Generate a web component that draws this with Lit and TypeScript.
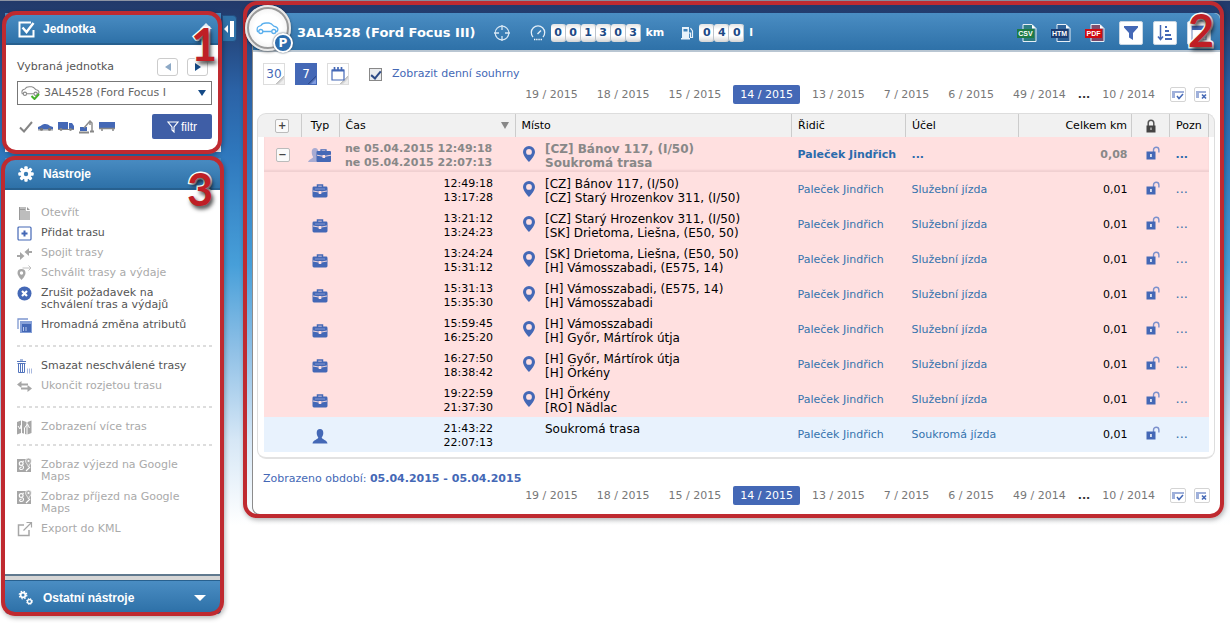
import { LitElement, html, svg, css, nothing } from "lit";
import { customElement, property } from "lit/decorators.js";

const BLUE = "#4468b6";
const GREY = "#a6a6a6";

const icon = (w: number, h: number, body: unknown) => html`<svg
  width=${w} height=${h} viewBox="0 0 ${w} ${h}" fill="none" aria-hidden="true">${body}</svg>`;

const carOutline = (color: string) => svg`<g stroke=${color} stroke-width="1.3" fill="none">
  <path d="M2.8 9.5H1.5C.8 7 1.2 5.200 2.500 4.500L5 3.500C6 1.600 7.500 1 10 1h3c2 .1 3.500 1.600 4.800 3.200 2 .5 3.700 1 4 2.600.2 1.200 0 2-.8 2.700h-1.200M6.800 9.500h9"/>
  <circle cx="4.800" cy="9.500" r="2"/><circle cx="17.800" cy="9.500" r="2"/></g>`;

const icons: Record<string, unknown> = {
  checkbox: icon(17, 17, svg`<path d="M13 1.500H1.500v14h14V9" stroke="#fff" stroke-width="2"/><path d="M4.500 6.500l4 4.500L15.500 2" stroke="#fff" stroke-width="2.400"/>`),
  gear: icon(16, 16, svg`<g fill="#fff"><circle cx="8" cy="8" r="5.400"/>${[0, 45, 90, 135].map(
    (a) => svg`<rect x="6.300" y=".3" width="3.400" height="15.400" rx="1" transform="rotate(${a} 8 8)"/>`)}</g><circle cx="8" cy="8" r="2.200" fill="#3a7db5"/>`),
  gears: icon(16, 16, svg`<g fill="none" stroke="#fff"><circle cx="5" cy="5" r="2.400" stroke-width="1.800"/><circle cx="5" cy="5" r="3.800" stroke-width="1.200" stroke-dasharray="1.500 1.500"/><circle cx="11.500" cy="11.500" r="2" stroke-width="1.300"/><circle cx="11.500" cy="11.500" r="3" stroke-width="1" stroke-dasharray="1.200 1.200"/></g>`),
  doc: icon(15, 15, svg`<path d="M2 1h7v4h4v9H2z" fill="#bdbdbd"/><path d="M10 1l3 3h-3zM3 3h5v1H3zM2 1h1v13H2z" fill="#999"/>`),
  plus: icon(15, 15, svg`<rect x="1" y="1" width="13" height="13" rx="1" stroke=${BLUE} stroke-width="1.200"/><path d="M7.500 4.500v6M4.500 7.500h6" stroke=${BLUE} stroke-width="2"/>`),
  join: icon(15, 15, svg`<path d="M0 9h3V6L7.500 10 3 14V11H0zM15 5h-3V2L7.500 6l4.500 4V7h3z" fill=${GREY}/>`),
  approve: icon(16, 16, svg`<path d="M4.500 4a4 4 0 0 0-4 4c0 3 4 7 4 7s4-4 4-7a4 4 0 0 0-4-4zm0 2.300a1.700 1.700 0 1 1 0 3.400 1.700 1.700 0 0 1 0-3.400z" fill=${GREY} fill-rule="evenodd"/><path d="M5.500 3H14M11.500 .5L14 3l-2.500 2.500" stroke="#c0c0c0"/>`),
  cancel: icon(15, 15, svg`<circle cx="7.500" cy="7.500" r="7" fill=${BLUE}/><path d="M5 5l5 5M10 5l-5 5" stroke="#fff" stroke-width="2.200"/>`),
  bulk: icon(15, 15, svg`<path d="M1 11V1h10" stroke="#7d97d0" stroke-width="1.300"/><rect x="3" y="3" width="12" height="12" fill="#86a0d8"/><rect x="5" y="6" width="9" height="8" fill=${BLUE}/><path d="M6.500 9v4M9 9v4" stroke="#b9c8ea"/>`),
  trash: icon(16, 15, svg`<path d="M0 2.500h9M3 1h3M.5 4.500h8M1.500 5v8.500h6V5M3.500 5v8M5.500 5v8" stroke="#5274bd"/><path d="M10.500 9.500v5M12.500 9.500v5M14.500 9.500v5" stroke="#a9b9df"/>`),
  swap: icon(15, 13, svg`<path d="M0 4.500L4.500 1v2.500H11v2H4.500V8zM15 8.500L10.500 5v2.500H4v2h6.500V12z" fill=${GREY}/>`),
  map: icon(15, 15, svg`<path d="M0 2l4-1.500V13l-4 1.500zM5 .5L9.500 2v12.500L5 13zM10.500 2L14.500 .5V13l-4 1.500z" fill=${GREY}/><path d="M1 6l2 3 1-4M7.500 14V8l3-4 2 4" stroke="#fff"/>`),
  gmap: icon(15, 15, svg`<rect x="0" y="1" width="14" height="13" fill=${GREY}/><circle cx="4.200" cy="5.500" r="1.900" stroke="#fff" stroke-width="1.200"/><path d="M5.500 3.300h1.500M5.300 7.500c2 1 1.500 4-1 4-2.400 0-2.200-2.500.5-2.500M9 13l4-4" stroke="#fff" stroke-width="1.100"/><path d="M11.500 0a3 3 0 0 1 3 3c0 2-2 3-3 6-1-3-3-4-3-6a3 3 0 0 1 3-3z" fill="#b0b0b0" stroke="#fff" stroke-width=".7"/><circle cx="11.500" cy="3" r="1" fill="#fff"/>`),
  export: icon(16, 16, svg`<path d="M7 4H1.500v10.500H12V9" stroke=${GREY} stroke-width="1.500"/><path d="M6.500 9.500L14 2M9.500 1.500h5v5" stroke=${GREY} stroke-width="1.200"/>`),
  tick: icon(14, 12, svg`<path d="M1 6.500l4 4L13 1" stroke="#858585" stroke-width="2"/>`),
  car: icon(15, 8, svg`<path d="M0 6.500V4l3-1.200C5 .3 10 .3 12 3l3 1v2.500z" fill=${BLUE}/><path d="M0 7h15" stroke="#999"/><circle cx="3.500" cy="6.300" r="1.500" fill="#777"/><circle cx="11.500" cy="6.300" r="1.500" fill="#777"/>`),
  truck: icon(16, 9, svg`<path d="M0 0h10v7H0zM11 1h3l2 3v3h-5z" fill=${BLUE}/><path d="M0 7.500h16" stroke="#888"/><circle cx="3" cy="7.500" r="1.400" fill="#888"/><circle cx="12.500" cy="7.500" r="1.400" fill="#888"/>`),
  crane: icon(15, 14, svg`<path d="M1 7h7v4H1z" fill=${BLUE}/><path d="M5 8l6-7 2 2v8M11 1v4" stroke="#8f8f8f" stroke-width="1.500"/><path d="M0 12.500h10M11 11.500h4" stroke="#888" stroke-width="2"/>`),
  trailer: icon(16, 9, svg`<path d="M0 0h16v6H0z" fill=${BLUE}/><path d="M0 6.500h16M3 6v3M14 6v3" stroke="#888" stroke-width="1.500"/>`),
  funnelLine: icon(12, 12, svg`<path d="M1 1h10L7 6v5L5 9V6z" stroke="#fff" stroke-width="1.100"/>`),
  greenCar: icon(21, 14, svg`<g transform="scale(.82)">${carOutline("#8a8a8a")}</g><path d="M10.500 10l3 3L18 8" stroke="#45b02c" stroke-width="2"/>`),
  carBadge: icon(24, 13, carOutline("#5bb0ee")),
  target: icon(16, 16, svg`<circle cx="8" cy="8" r="6.800" stroke="#d6e7f5" stroke-width="1.200"/><path d="M8 0v5M8 11v5M0 8h5M11 8h5" stroke="#d6e7f5" stroke-width="1.300"/>`),
  gauge: icon(16, 16, svg`<path d="M3 12A6.700 6.700 0 1 1 13 12" stroke="#e4eff8" stroke-width="1.300"/><path d="M7.500 9l3.500-3.500" stroke="#e4eff8" stroke-width="1.500"/><path d="M4 14.500h8" stroke="#fff" stroke-width="1.600" stroke-dasharray="1.300 .9"/>`),
  fuel: icon(13, 14, svg`<path d="M1 1h7v11.500H1zM0 12h9v1.500H0z" fill="#e9f2fa"/><path d="M2.500 3h4v2.500h-4z" fill="#3f82b9"/><path d="M8 7h1.500v4.500H11.500V5L9.500 2" stroke="#e9f2fa" stroke-width="1.200"/>`),
  filterBig: icon(16, 16, svg`<path d="M1 1h14v1.500L10 8v7l-4-2.500V8L1 2.500z" fill=${BLUE}/>`),
  sort: icon(16, 16, svg`<path d="M3.500 0v14M1 11.500L3.500 14.500 6 11.500" stroke=${BLUE} stroke-width="1.500"/><path d="M8 2h2M8 6h4M8 10h6M8 14h7" stroke=${BLUE} stroke-width="2.200"/>`),
  window: icon(16, 16, svg`<rect x="1" y="1" width="14" height="14" stroke="#6e87b8"/><path d="M1 1h14v4H1z" fill=${BLUE}/>`),
  calendar: icon(14, 14, svg`<path d="M1 3h12v10H1z" stroke=${BLUE} stroke-width="1.200"/><path d="M1 3.500h12" stroke=${BLUE} stroke-width="2"/><path d="M3.500 0v3M7 0v3M10.500 0v3" stroke=${BLUE} stroke-width="1.700"/>`),
  selAll: icon(12, 10, svg`<path d="M0 1h12v2H3v5H0z" fill="#9fb0da"/><path d="M5 6l2 2.500L11 4" stroke=${BLUE} stroke-width="1.500"/>`),
  selNone: icon(12, 10, svg`<path d="M0 1h10v2H3v5H0z" fill="#9fb0da"/><path d="M6 4.500l4 4M10 4.500l-4 4" stroke=${BLUE} stroke-width="1.600"/>`),
  brief: icon(16, 14, svg`<path d="M5.500 3V1h5v2" stroke=${BLUE} stroke-width="1.500"/><rect x=".5" y="2.500" width="15" height="11" rx="1.400" fill=${BLUE}/><path d="M1 7q7 2.500 14 0" stroke="#ffe0e0" stroke-width=".9"/><path d="M3 5h10" stroke="#8c9bd0" stroke-width=".9"/><rect x="6.700" y="7" width="2.600" height="3" fill="#ffe0e0"/>`),
  personBrief: icon(24, 16, svg`<path d="M7 0c2 0 3.300 1.500 3.300 4S9.500 8 8.800 9c.4 1.500 4 2 5.200 5H0c1.200-3 4.800-3.500 5.200-5C4.500 8 3.700 6.500 3.700 4S5 0 7 0z" fill="#a8abd2"/><path d="M13 3V1.800h5V3" stroke=${BLUE} stroke-width="1.300"/><rect x="8.500" y="3" width="14.500" height="11" rx="1" fill=${BLUE}/><path d="M9 7.200q7 2.500 14 0" stroke="#ffe0e0" stroke-width=".9"/><rect x="14.500" y="7" width="2.600" height="3" fill="#ffe0e0"/>`),
  person: icon(16, 15, svg`<path d="M8 0c2.200 0 3.300 1.500 3.300 4 0 2-1 3.500-1.600 4.500C10 10.500 15 11 15.500 14.500H.5C1 11 6 10.500 6.300 8.500 5.700 7.500 4.700 6 4.700 4 4.700 1.500 5.800 0 8 0z" fill=${BLUE}/>`),
  pin: icon(12, 16, svg`<path d="M6 0a6 6 0 0 0-6 6c0 4 6 10 6 10s6-6 6-10a6 6 0 0 0-6-6zm0 3a2.900 2.900 0 1 1 0 5.800A2.900 2.900 0 0 1 6 3z" fill=${BLUE} fill-rule="evenodd"/>`),
  unlock: icon(14, 16, svg`<path d="M7.500 6V4a2.700 2.700 0 0 1 5.400 0v2.500" stroke="#7b90cc" stroke-width="1.400"/><rect x=".5" y="5.500" width="9" height="8" fill=${BLUE}/><rect x="4.200" y="8" width="1.500" height="3" fill="#fff"/>`),
  lock: icon(10, 14, svg`<path d="M2.200 7V4a2.800 2.800 0 0 1 5.600 0v3" stroke="#555" stroke-width="1.500"/><rect x=".5" y="6.500" width="9" height="7" fill="#444"/><rect x="4.300" y="8.500" width="1.400" height="2.500" fill="#bbb"/>`),
};

interface Tool { name: string; icon: string; on?: boolean }
const toolGroups: Tool[][] = [
  [
    { name: "Otevřít", icon: "doc" },
    { name: "Přidat trasu", icon: "plus", on: true },
    { name: "Spojit trasy", icon: "join" },
    { name: "Schválit trasy a výdaje", icon: "approve" },
    { name: "Zrušit požadavek na schválení tras a výdajů", icon: "cancel", on: true },
    { name: "Hromadná změna atributů", icon: "bulk", on: true },
  ],
  [
    { name: "Smazat neschválené trasy", icon: "trash", on: true },
    { name: "Ukončit rozjetou trasu", icon: "swap" },
  ],
  [{ name: "Zobrazení více tras", icon: "map" }],
  [
    { name: "Zobraz výjezd na Google Maps", icon: "gmap" },
    { name: "Zobraz příjezd na Google Maps", icon: "gmap" },
    { name: "Export do KML", icon: "export" },
  ],
];

const driver = "Paleček Jindřich";
const rides = [
  ["12:49:18", "13:17:28", "[CZ] Bánov 117, (I/50)", "[CZ] Starý Hrozenkov 311, (I/50)"],
  ["13:21:12", "13:24:23", "[CZ] Starý Hrozenkov 311, (I/50)", "[SK] Drietoma, Liešna, (E50, 50)"],
  ["13:24:24", "15:31:12", "[SK] Drietoma, Liešna, (E50, 50)", "[H] Vámosszabadi, (E575, 14)"],
  ["15:31:13", "15:35:30", "[H] Vámosszabadi, (E575, 14)", "[H] Vámosszabadi"],
  ["15:59:45", "16:25:20", "[H] Vámosszabadi", "[H] Győr, Mártírok útja"],
  ["16:27:50", "18:38:42", "[H] Győr, Mártírok útja", "[H] Örkény"],
  ["19:22:59", "21:37:30", "[H] Örkény", "[RO] Nădlac"],
  ["21:43:22", "22:07:13", "Soukromá trasa", ""],
];

const base = css`
  * { box-sizing: border-box; }
  button, select, input { font: inherit; margin: 0; padding: 0; border: 0; background: none; color: inherit; }
  a { color: inherit; text-decoration: none; }
  svg { display: block; flex: none; }
  .callout {
    position: absolute; border: 4px solid #bf2a30; border-radius: 14px; pointer-events: none;
    box-shadow: 1px 2px 5px rgba(0, 0, 0, 0.3); z-index: 2;
  }
  .mark {
    position: absolute; z-index: 3; pointer-events: none; font: bold 45px/45px Lato, sans-serif; color: #bf1f26;
    -webkit-text-stroke: 3px #fff; paint-order: stroke fill; text-shadow: 2px 3px 4px rgba(0, 0, 0, 0.75);
  }
`;

@customElement("week-pager")
class WeekPager extends LitElement {
  static styles = [base, css`
    :host { display: block; }
    .pager { display: flex; justify-content: flex-end; align-items: center; height: 19px; gap: 5px; padding-right: 10px; }
    .week { padding: 0 7px; line-height: 19px; color: #777; white-space: nowrap; }
    .current { background: #4468b6; color: #fff; border-radius: 2px; }
    .dots { color: #333; font-weight: bold; }
    .pick { width: 16px; height: 15px; border: 1px solid #d4d4d4; border-radius: 2px; display: grid; place-items: center; margin-left: 3px; background: #fff; }
  `];
  render() {
    const weeks = ["19 / 2015", "18 / 2015", "15 / 2015", "14 / 2015", "13 / 2015", "7 / 2015", "6 / 2015", "49 / 2014"];
    return html`<nav class="pager" aria-label="Týdny">
      ${weeks.map((w) => html`<a href="#" class="week ${w.startsWith("14") ? "current" : ""}">${w}</a>`)}
      <span class="dots">...</span>
      <a href="#" class="week">10 / 2014</a>
      <button class="pick" aria-label="Vybrat vše">${icons.selAll}</button>
      <button class="pick" aria-label="Zrušit výběr">${icons.selNone}</button>
    </nav>`;
  }
}

@customElement("counter-digits")
class CounterDigits extends LitElement {
  @property() value = "";
  static styles = css`
    :host { display: flex; }
    .digit {
      width: 15px; height: 18px; font: bold 11px/18px "DejaVu Sans", sans-serif; text-align: center; color: #1d4a86;
      background: linear-gradient(#e4e4e4, #fff 30%, #fff 65%, #d5d5d5); border-radius: 3px; box-shadow: inset -1px 0 #bcc4cc;
    }
  `;
  render() {
    return [...this.value].map((d) => html`<span class="digit">${d}</span>`);
  }
}

@customElement("side-bar")
class SideBar extends LitElement {
  static styles = [base, css`
    :host { display: block; }
    .panel { position: relative; }
    .unit { margin-top: 13px; }
    .tools { margin-top: 6px; }
    .head {
      display: flex; align-items: center; gap: 8px; width: 100%; height: 32px; padding: 2px 15px 0 12px;
      font: bold 12px/16px "Liberation Sans", Arial, sans-serif; color: #fff;
      background: linear-gradient(#4a8dc3, #2e71a8); border-bottom: 2px solid #27608f;
    }
    .head .label { flex: 1; text-align: left; }
    .glyph { width: 18px; display: grid; place-items: center; }
    .up, .down { border: 6px solid transparent; }
    .up { border-bottom-color: #dfe9f2; border-top: 0; }
    .unit .up { margin-bottom: 6px; margin-right: -6px; }
    .down { border-top-color: #fff; border-bottom: 0; }
    .body { background: #fff; }
    .form { padding: 13px 9px 13px 12px; }
    .row { display: flex; align-items: center; }
    .between { justify-content: space-between; }
    .steps { display: flex; gap: 9px; padding-right: 4px; }
    .step { width: 21px; height: 18px; border: 1px solid #ccc; border-radius: 3px; display: grid; place-items: center; }
    .tri { border: 4px solid transparent; border-left: 6px solid #154a86; border-right: 0; }
    .prev { border: 4px solid transparent; border-right: 6px solid #8da9c6; border-left: 0; }
    .picker { display: flex; align-items: center; position: relative; margin: 5px 0 9px; }
    .picker svg { position: absolute; left: 4px; pointer-events: none; }
    .picker .down { position: absolute; right: 6px; border-width: 4px; border-top: 6px solid #154a86; border-bottom: 0; pointer-events: none; }
    select { appearance: none; width: 100%; height: 24px; border: 1px solid #777; padding: 0 26px; color: #666; background: #fff; }
    .kinds { display: flex; align-items: center; gap: 5px; padding-left: 2px; }
    .filter {
      display: flex; align-items: center; justify-content: center; gap: 2px; width: 60px; height: 25px;
      background: #3f5ea6; color: #fff; border-radius: 2px; font: 12px/16px "Liberation Sans", Arial, sans-serif;
    }
    .list { padding: 13px 9px 35px 12px; }
    .tool { display: flex; width: 100%; gap: 8px; padding: 4px 0; line-height: 12px; text-align: left; color: #aaa; }
    .on { color: #555; }
    .tool .slot { width: 16px; height: 12px; display: grid; align-content: center; }
    .tool .name { flex: 1; padding-right: 10px; }
    hr { border: 0; height: 2px; margin: 10px 0 9px; background: repeating-linear-gradient(90deg, #ddd 0 3px, transparent 3px 6px); }
    hr.tight { margin: 7px 0 9px; }
    .other { border-top: 1px solid #27608f; height: 34px; border-radius: 0 0 4px 4px; }
    .split { height: 6px; background: #d5d5d5; border-top: 2px solid #60798f; }
    .handle {
      position: absolute; left: 217px; top: 2px; width: 15px; height: 27px; background: #2f72a9; border: 1px solid #234e82;
      border-radius: 0 4px 4px 0; display: flex; align-items: center; gap: 2px; padding-left: 1px;
    }
    .handle .prev { border-right: 4px solid #fff; }
    .bar { width: 4px; height: 16px; background: #fff; }
    .c1 { inset: -2px -1px -2px -3px; }
    .c3 { inset: -2px -3px -2px -4px; }
    .m1 { left: 186px; top: 9px; }
    .m3 { left: 182px; top: 9px; }
  `];
  render() {
    return html`
      <section class="panel unit">
        <button class="head"><span class="glyph">${icons.checkbox}</span><span class="label">Jednotka</span><span class="up"></span></button>
        <button class="handle" aria-label="Skrýt panel"><span class="prev"></span><span class="bar"></span></button>
        <div class="body form">
          <div class="row between">
            <label for="unit">Vybraná jednotka</label>
            <span class="steps">
              <button class="step" aria-label="Předchozí"><span class="prev"></span></button>
              <button class="step" aria-label="Další"><span class="tri"></span></button>
            </span>
          </div>
          <div class="picker">
            <select id="unit"><option>3AL4528 (Ford Focus I</option></select>
            ${icons.greenCar}<span class="down"></span>
          </div>
          <div class="row between">
            <span class="kinds">${icons.tick}${["car", "truck", "crane", "trailer"].map((k) => icons[k])}</span>
            <button class="filter">${icons.funnelLine}filtr</button>
          </div>
        </div>
        <div class="callout c1"></div>
        <span class="mark m1">1</span>
      </section>
      <section class="panel tools">
        <button class="head"><span class="glyph">${icons.gear}</span><span class="label">Nástroje</span></button>
        <div class="body list">
          ${toolGroups.map((group, i) => html`
            ${i ? html`<hr class=${i === 3 ? "tight" : ""} />` : nothing}
            ${group.map((t) => html`<button class="tool ${t.on ? "on" : ""}">
              <span class="slot">${icons[t.icon]}</span><span class="name">${t.name}</span></button>`)}`)}
        </div>
        <div class="split"></div>
        <button class="head other"><span class="glyph">${icons.gears}</span><span class="label">Ostatní nástroje</span><span class="down"></span></button>
        <div class="callout c3"></div>
        <span class="mark m3">3</span>
      </section>`;
  }
}

@customElement("ride-book")
class RideBook extends LitElement {
  static styles = [base, css`
    :host { display: block; position: relative; }
    .panel { background: #fff; border: 1px solid #8c8c8c; border-top: 0; border-radius: 0 6px 8px 8px; }
    .head {
      display: flex; align-items: center; height: 39px; padding: 3px 9px 0 44px; color: #fff; font-weight: bold; white-space: nowrap;
      background: linear-gradient(#4a8dc3, #2e71a8); border-bottom: 2px solid #b9c6d2; border-radius: 0 6px 0 0;
    }
    .title { font-size: 13px; margin: 0 18px 0 0; }
    .dist, .fuel { display: flex; align-items: center; gap: 5px; }
    .dist { margin-left: 20px; }
    .fuel { margin-left: 17px; }
    .actions { display: flex; align-items: center; gap: 10px; margin-left: auto; }
    .files { display: flex; gap: 14px; margin-right: 4px; }
    .square { width: 24px; height: 24px; background: #fff; border-radius: 2px; display: grid; place-items: center; border: 1px solid #c9d7e4; }
    .ftext { font: bold 7px "Liberation Sans", Arial, sans-serif; fill: #fff; }
    .vehicle {
      position: absolute; left: -7px; top: -8px; width: 46px; height: 46px; border-radius: 50%; border: 4px solid #9a9a9a;
      outline: 2px solid #e8e8e8; outline-offset: -2px; background: radial-gradient(#fff 50%, #e9e9e9); display: grid; place-items: center; z-index: 4;
      box-shadow: 0 1px 3px rgba(0, 0, 0, 0.5);
    }
    .park {
      position: absolute; left: 21px; top: 20px; width: 20px; height: 20px; border-radius: 50%; border: 2px solid #fff; z-index: 5;
      background: #2b6cad; color: #fff; font: bold 12px/16px "DejaVu Sans", sans-serif; text-align: center; box-shadow: 0 0 2px #345;
    }
    .options { display: flex; align-items: center; gap: 10px; padding: 11px 10px 0; }
    .leaf {
      width: 22px; height: 22px; border: 1px solid #ddd; display: grid; place-items: center; color: #4468b6; font-size: 12px;
      background: linear-gradient(135deg, #fff 78%, #bbb 79%, #eee 90%);
    }
    .active { background: linear-gradient(135deg, #4468b6 78%, #24448a 79%, #7f9be0 90%); border-color: #4468b6; color: #fff; }
    .daily { display: flex; align-items: center; gap: 10px; margin-left: 10px; color: #4468b6; }
    .tick { appearance: none; width: 13px; height: 13px; border: 1px solid #888; background: #e9ebee; display: grid; place-items: center; }
    .tick:checked::before { content: ""; width: 4px; height: 8px; border: solid #2c4a86; border-width: 0 2px 2px 0; transform: rotate(40deg); }
    .frame {
      margin: 9px 5px 0 4px; padding: 0 5px 5px 6px; border: 1px solid #ddd; border-bottom: 2px solid #e2e2e2; border-radius: 9px;
      background: linear-gradient(#f1f1f1 23px, #fff 23px);
    }
    table { width: 100%; border-collapse: collapse; table-layout: fixed; }
    th { height: 23px; padding: 0 6px; text-align: left; font-weight: normal; color: #000; border-right: 1px solid #ccc; white-space: nowrap; overflow: hidden; }
    td { height: 35px; padding: 0 6px; overflow: hidden; white-space: nowrap; color: #000; line-height: 14px; }
    .center svg, .type svg, .state svg { margin: 0 auto; }
    tr.work { background: #ffe0e0; }
    tr.private { background: #e8f2fd; }
    tr.sum { box-shadow: inset 0 -2px 2px #f0cfd0; }
    tr.sum td { font-weight: bold; color: #888; }
    .w-fold { width: 37px; } .w-type { width: 38px; } .w-time { width: 176px; } .w-user { width: 114px; }
    .w-mid { width: 113px; } .w-lock { width: 38px; } .w-note { width: 39px; }
    th.center { text-align: center; padding: 0; }
    th.right, td.right { text-align: right; padding: 0 4px; }
    td.state { padding: 0 0 2px 4px; }
    .sorted { display: flex; justify-content: space-between; align-items: center; }
    .sort { border: 4px solid transparent; border-top: 7px solid #888; border-bottom: 0; }
    .fold { display: grid; place-items: center; width: 14px; height: 14px; margin: 0 auto; border: 1px solid #bbb; border-radius: 2px; background: #fafafa; color: #444; font: bold 10px/10px "DejaVu Sans", sans-serif; }
    td.times { text-align: right; padding: 3px 22px 0 0; }
    tr.sum td.times { text-align: left; padding: 3px 0 0 6px; }
    td.type { padding: 3px 0 0; }
    .place { display: flex; align-items: flex-start; gap: 10px; padding: 2px 0 0 2px; font-size: 12px; }
    .place svg { margin-top: 4px; }
    .place .where { height: 28px; }
    .blank { width: 12px; }
    td a { color: #3573ad; }
    tr.sum td a { color: #2a6bac; }
    td a.more { font-size: 13px; }
    .period { margin: 12px 10px 0; color: #4468b6; line-height: 15px; }
    week-pager.bottom { margin-bottom: 9px; }
    .c2 { inset: -12px -3px -3px -9px; }
    .m2 { right: 7px; top: -5px; }
  `];

  file(label: string, color: string) {
    return html`<button aria-label=${label}>${icon(20, 18, svg`
      <path d="M6 .5h9l4 4v13H6z" stroke="#e6eef6" fill=${color} fill-opacity=".45"/><path d="M15 .5l4 4h-4z" fill="#fff"/>
      <rect x="0" y="5" width="17" height="9" fill=${color}/>
      <text class="ftext" x="8.500" y="12" text-anchor="middle">${label}</text>`)}</button>`;
  }

  ride([from, to, a, b]: string[]) {
    const priv = !b;
    return html`<tr class=${priv ? "private" : "work"}>
      <td></td>
      <td class="type">${priv ? icons.person : icons.brief}</td>
      <td class="times">${from}<br />${to}</td>
      <td><div class="place">${priv ? html`<span class="blank"></span>` : icons.pin}<span class="where">${a}<br />${b}</span></div></td>
      <td><a href="#">${driver}</a></td>
      <td><a href="#">${priv ? "Soukromá jízda" : "Služební jízda"}</a></td>
      <td class="right">0,01</td>
      <td class="state">${icons.unlock}</td>
      <td><a href="#" class="more">...</a></td>
    </tr>`;
  }

  render() {
    return html`
      <div class="panel">
        <header class="head">
          <h1 class="title">3AL4528 (Ford Focus III)</h1>
          ${icons.target}
          <span class="dist">${icons.gauge}<counter-digits value="001303"></counter-digits>km</span>
          <span class="fuel">${icons.fuel}<counter-digits value="040"></counter-digits>l</span>
          <div class="actions">
            <span class="files">${this.file("CSV", "#1d7a45")}${this.file("HTM", "#1c3c72")}${this.file("PDF", "#d00a10")}</span>
            <button class="square" aria-label="Filtr">${icons.filterBig}</button>
            <button class="square" aria-label="Řazení">${icons.sort}</button>
            <button class="square" aria-label="Sloupce">${icons.window}</button>
          </div>
        </header>
        <div class="options">
          <button class="leaf">30</button>
          <button class="leaf active">7</button>
          <button class="leaf" aria-label="Kalendář">${icons.calendar}</button>
          <label class="daily"><input class="tick" type="checkbox" checked />Zobrazit denní souhrny</label>
        </div>
        <week-pager></week-pager>
        <div class="frame">
          <table>
            <colgroup>
              <col class="w-fold" /><col class="w-type" /><col class="w-time" /><col /><col class="w-user" />
              <col class="w-mid" /><col class="w-mid" /><col class="w-lock" /><col class="w-note" />
            </colgroup>
            <thead>
              <tr>
                <th class="center"><button class="fold">+</button></th>
                <th class="center">Typ</th>
                <th><span class="sorted">Čas<span class="sort"></span></span></th>
                <th>Místo</th><th>Řidič</th><th>Účel</th>
                <th class="right">Celkem km</th>
                <th class="center">${icons.lock}</th>
                <th>Pozn</th>
              </tr>
            </thead>
            <tbody>
              <tr class="work sum">
                <td><button class="fold">−</button></td>
                <td class="type">${icons.personBrief}</td>
                <td class="times">ne 05.04.2015 12:49:18<br />ne 05.04.2015 22:07:13</td>
                <td><div class="place">${icons.pin}<span class="where">[CZ] Bánov 117, (I/50)<br />Soukromá trasa</span></div></td>
                <td><a href="#">${driver}</a></td>
                <td><a href="#">...</a></td>
                <td class="right">0,08</td>
                <td class="state">${icons.unlock}</td>
                <td><a href="#">...</a></td>
              </tr>
              ${rides.map((r) => this.ride(r))}
            </tbody>
          </table>
        </div>
        <p class="period">Zobrazeno období: <b>05.04.2015 - 05.04.2015</b></p>
        <week-pager class="bottom"></week-pager>
      </div>
      <div class="vehicle">${icons.carBadge}</div>
      <span class="park">P</span>
      <div class="callout c2"></div>
      <span class="mark m2">2</span>`;
  }
}

@customElement("app-root")
class AppRoot extends LitElement {
  static styles = css`
    :host {
      display: block; min-height: 100vh; overflow: hidden;
      font: 11px/14px "DejaVu Sans", Verdana, sans-serif; color: #555;
      background: linear-gradient(#22396a, #233f72 20px, #2b62a6 90px, #2f78bd 155px, #479fd9 265px, #8fc0e6 350px, #d6e7f6 440px, #fff 525px);
    }
    .layout { display: grid; grid-template-columns: 216px minmax(0, 1fr); column-gap: 31px; align-items: start; padding: 0 9px 0 5px; border-top: 1px solid #8c93a3; }
    side-bar { margin-top: -1px; }
    ride-book { margin-top: 12px; }
  `;
  render() {
    return html`<div class="layout"><side-bar></side-bar><ride-book></ride-book></div>`;
  }
}
